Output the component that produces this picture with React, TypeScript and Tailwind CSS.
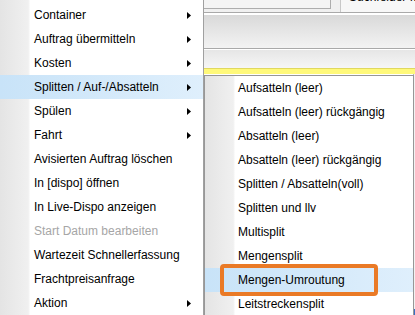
import React from 'react'

const mainItems = [
  { label: 'Container', sub: true },
  { label: 'Auftrag übermitteln', sub: true },
  { label: 'Kosten', sub: true },
  { label: 'Splitten / Auf-/Absatteln', sub: true, active: true },
  { label: 'Spülen', sub: true },
  { label: 'Fahrt', sub: true },
  { label: 'Avisierten Auftrag löschen' },
  { label: 'In [dispo] öffnen' },
  { label: 'In Live-Dispo anzeigen' },
  { label: 'Start Datum bearbeiten', disabled: true },
  { label: 'Wartezeit Schnellerfassung' },
  { label: 'Frachtpreisanfrage' },
  { label: 'Aktion', sub: true },
]

const subItems = [
  'Aufsatteln (leer)',
  'Aufsatteln (leer) rückgängig',
  'Absatteln (leer)',
  'Absatteln (leer) rückgängig',
  'Splitten / Absatteln(voll)',
  'Splitten und llv',
  'Multisplit',
  'Mengensplit',
  'Mengen-Umroutung',
  'Leitstreckensplit',
]

function Arrow() {
  return (
    <svg width="4" height="7" viewBox="0 0 4 7" className="shrink-0">
      <polygon points="0,0 4,3.5 0,7" fill="#000" />
    </svg>
  )
}

export default function App() {
  return (
    <div
      className="relative w-[415px] h-[315px] overflow-hidden bg-white text-[12px] text-black"
      style={{ fontFamily: '"Segoe UI", "Liberation Sans", Arial, sans-serif' }}
    >
      {/* Background window behind the menus */}
      <div className="flex flex-col h-full pl-[204px]">
        <div className="h-[13px] bg-[#f0f0f0] flex border-b border-[#a9a9a9] overflow-hidden">
          <div className="w-[127px] h-[9px] border-r border-b border-[#adadad] bg-[#f4f4f4]" />
          <div className="ml-[9px] flex-1 h-[12px] border-l border-[#c8c8c8] bg-[#f7f7f7] pl-[8px] overflow-hidden">
            <div className="whitespace-nowrap leading-[14px] -mt-[10px]">Suchfelder für</div>
          </div>
        </div>
        <div className="h-[2px] bg-white" />
        <div className="h-[34px] bg-gradient-to-b from-[#d9d9d9] to-[#f3f3f3] border-b border-[#a9a9a9]" />
        <div className="h-[1px] bg-white" />
        <div className="h-[18px] bg-gradient-to-b from-[#e6e6e6] to-[#f6f6f6]" />
        <div className="h-[6px] bg-[#fff97a] border-t border-[#e0d860]" />
        <div className="flex-1 flex justify-end bg-white">
          <div className="w-[2px] h-full bg-[#f2f2f2] border-l border-[#b8b8b8] flex flex-col justify-end">
            <div className="h-[6px] bg-[#3a6fc4]" />
          </div>
        </div>
      </div>

      {/* Main context menu */}
      <div className="absolute left-0 top-0 w-[204px] h-[315px] border-r border-[#a0a0a0] pt-[3px] bg-[linear-gradient(to_right,#e4e4e4_0px,#f0f0f0_28px,#f4f4f4_29px,#ffffff_30px)]">
        {mainItems.map((it) => (
          <div
            key={it.label}
            className={`h-[24px] flex items-center pl-[34px] pr-[12px] ${
              it.active ? 'bg-gradient-to-r from-[#c8e3f8] to-[#dfeffc]' : ''
            } ${it.disabled ? 'text-[#a6a6a6]' : 'text-black'}`}
          >
            <span className="flex-1 whitespace-nowrap">{it.label}</span>
            {it.sub && <Arrow />}
          </div>
        ))}
      </div>

      {/* Submenu */}
      <div className="absolute left-[204px] top-[75px] w-[210px] h-[260px] border border-[#979797] bg-[linear-gradient(to_right,#e4e4e4_0px,#f0f0f0_28px,#f4f4f4_29px,#ffffff_30px)]">
        {subItems.map((label) => (
          <div
            key={label}
            className={`relative h-[24px] flex items-center pl-[33px] ${
              label === 'Mengen-Umroutung' ? 'bg-gradient-to-r from-[#c8e3f8] to-[#dfeffc]' : ''
            }`}
          >
            <span className="whitespace-nowrap">{label}</span>
            {label === 'Mengen-Umroutung' && (
              <div className="absolute left-[15px] top-[-4px] w-[158px] h-[32px] border-[4px] border-[#ea7a26] rounded-[4px]" />
            )}
          </div>
        ))}
      </div>
    </div>
  )
}
